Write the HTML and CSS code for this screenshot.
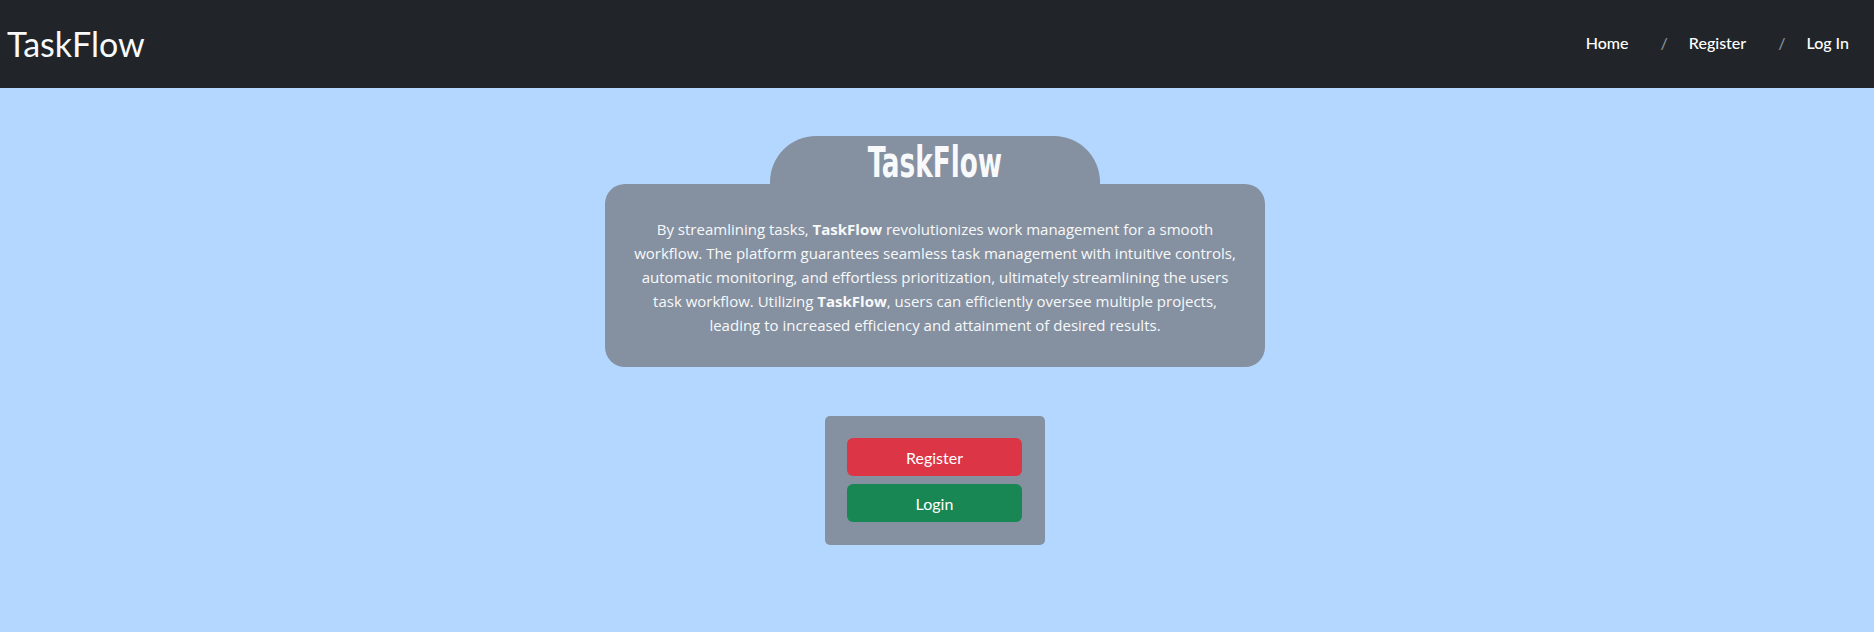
FILE: index.html
```html
<!DOCTYPE html>
<html lang="en">
<head>
<meta charset="utf-8">
<title>TaskFlow</title>
<link rel="stylesheet" href="styles.css">
</head>
<body>
<header class="navbar">
  <a class="brand" href="#">TaskFlow</a>
  <nav class="nav">
    <a class="nav-link" href="#">Home</a>
    <span class="sep">/</span>
    <a class="nav-link" href="#">Register</a>
    <span class="sep">/</span>
    <a class="nav-link" href="#">Log In</a>
  </nav>
</header>
<main class="hero">
  <section class="intro">
    <div class="intro-tab"><h1 class="intro-title">TaskFlow</h1></div>
    <div class="intro-card">
      <p class="intro-text">By streamlining tasks, <strong>TaskFlow</strong> revolutionizes work management for a smooth workflow. The platform guarantees seamless task management with intuitive controls, automatic monitoring, and effortless prioritization, ultimately streamlining the users task workflow. Utilizing <strong>TaskFlow</strong>, users can efficiently oversee multiple projects, leading to increased efficiency and attainment of desired results.</p>
    </div>
  </section>
  <div class="actions">
    <a class="btn btn-red" href="#">Register</a>
    <a class="btn btn-green" href="#">Login</a>
  </div>
</main>
</body>
</html>
```
FILE: styles.css
```css
* { box-sizing: border-box; }
html, body { margin: 0; padding: 0; }
body {
  background: #b3d7ff;
  font-family: Lato, "Liberation Sans", sans-serif;
  color: #fff;
  min-height: 632px;
}
a { text-decoration: none; color: #fff; }

.navbar {
  height: 88px;
  background: #212529;
  display: flex;
  align-items: center;
  justify-content: space-between;
  padding: 0 25px 0 7px;
}
.brand {
  font-size: 34px;
  line-height: 1;
  font-weight: 400;
  color: #f8f9fa;
}
.nav {
  display: flex;
  align-items: center;
  font-size: 16px;
  font-weight: 500;
  margin-top: -4px;
}
.nav-link { color: #fff; }
.sep {
  color: #8a939b;
  margin: 0 21px 0 32px;
}

.hero {
  display: flex;
  flex-direction: column;
  align-items: center;
  padding: 48px 4px 0 0;
}
.intro {
  display: flex;
  flex-direction: column;
  align-items: center;
  width: 660px;
}
.intro-tab {
  width: 330px;
  height: 48px;
  background: #8591a1;
  border-radius: 46px 46px 0 0;
  display: flex;
  justify-content: center;
}
.intro-title {
  margin: 2px 0 0;
  font-family: "Liberation Sans Narrow", "DejaVu Sans Condensed", sans-serif;
  font-weight: 700;
  font-size: 43px;
  line-height: 48px;
  color: #f8f9fa;
  transform: scaleX(0.68);
}
.intro-card {
  width: 660px;
  background: #8591a1;
  border-radius: 20px;
  padding: 33px 26px 30px;
}
.intro-text {
  margin: 0;
  text-align: center;
  font-family: "Open Sans", sans-serif;
  font-size: 15px;
  line-height: 24px;
  color: #f8f9fa;
}
.intro-text strong { font-weight: 700; }

.actions {
  margin-top: 49px;
  width: 220px;
  background: #8591a1;
  border-radius: 5px;
  padding: 22px 23px 23px 22px;
  display: flex;
  flex-direction: column;
  gap: 8px;
}
.btn {
  height: 38px;
  border-radius: 6px;
  display: flex;
  align-items: center;
  justify-content: center;
  font-size: 16px;
  color: #fff;
}
.btn-red { background: #dc3545; }
.btn-green { background: #198754; }
```
